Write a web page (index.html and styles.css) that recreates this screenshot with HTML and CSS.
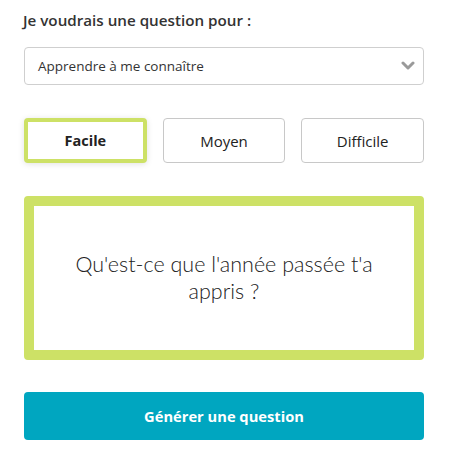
FILE: index.html
```html
<!DOCTYPE html>
<html lang="fr">
<head>
<meta charset="utf-8">
<link rel="stylesheet" href="styles.css">
</head>
<body>
<div class="page">
  <label class="label">Je voudrais une question pour :</label>
  <div class="select">
    <span class="select-text">Apprendre à me connaître</span>
    <svg class="chevron" width="14" height="10" viewBox="0 0 14 10"><path d="M2 2 L7 7 L12 2" fill="none" stroke="#9a9a9a" stroke-width="3" stroke-linecap="round" stroke-linejoin="round"/></svg>
  </div>
  <div class="levels">
    <button class="level active">Facile</button>
    <button class="level">Moyen</button>
    <button class="level">Difficile</button>
  </div>
  <div class="card">
    <p class="question">Qu'est-ce que l'année passée t'a appris ?</p>
  </div>
  <button class="generate">Générer une question</button>
</div>
</body>
</html>
```
FILE: styles.css
```css
* { box-sizing: border-box; }
html, body { margin: 0; padding: 0; background: #fff; }
body { font-family: "Open Sans", "Noto Sans", sans-serif; color: #222; }
.page { padding: 9px 28px 0 24px; width: 452px; display: flex; flex-direction: column; }
.label { font-size: 15.2px; font-weight: 600; color: #333; line-height: 22px; margin-left: -1px; }
.select { margin-top: 16px; height: 38px; border: 1px solid #cfcfcf; border-radius: 4px; display: flex; align-items: center; justify-content: space-between; padding: 0 8px 0 13px; }
.select-text { font-size: 13.5px; color: #333; }
.chevron { display: block; }
.levels { margin-top: 33px; display: grid; grid-template-columns: repeat(3, 1fr); gap: 16px; }
.level { height: 45px; background: #fff; border: 1px solid #c8c8c8; border-radius: 4px; font-family: "Open Sans", sans-serif; font-size: 15px; color: #222; padding: 0; }
.level.active { border: 4px solid #cde166; font-weight: 700; font-size: 14.5px; box-shadow: 0 1px 6px rgba(0,0,0,0.12); }
.card { margin-top: 33px; height: 164px; border: 10px solid #cde166; border-radius: 4px; display: flex; align-items: center; justify-content: center; padding: 0 30px; }
.question { margin: 0; text-align: center; font-family: Lato, sans-serif; font-weight: 300; font-size: 21.5px; line-height: 27px; color: #222; }
.generate { margin-top: 32px; height: 48px; border: none; border-radius: 4px; background: #00a6c0; color: #fff; font-family: "Open Sans", sans-serif; font-weight: 700; font-size: 14.7px; }
```
